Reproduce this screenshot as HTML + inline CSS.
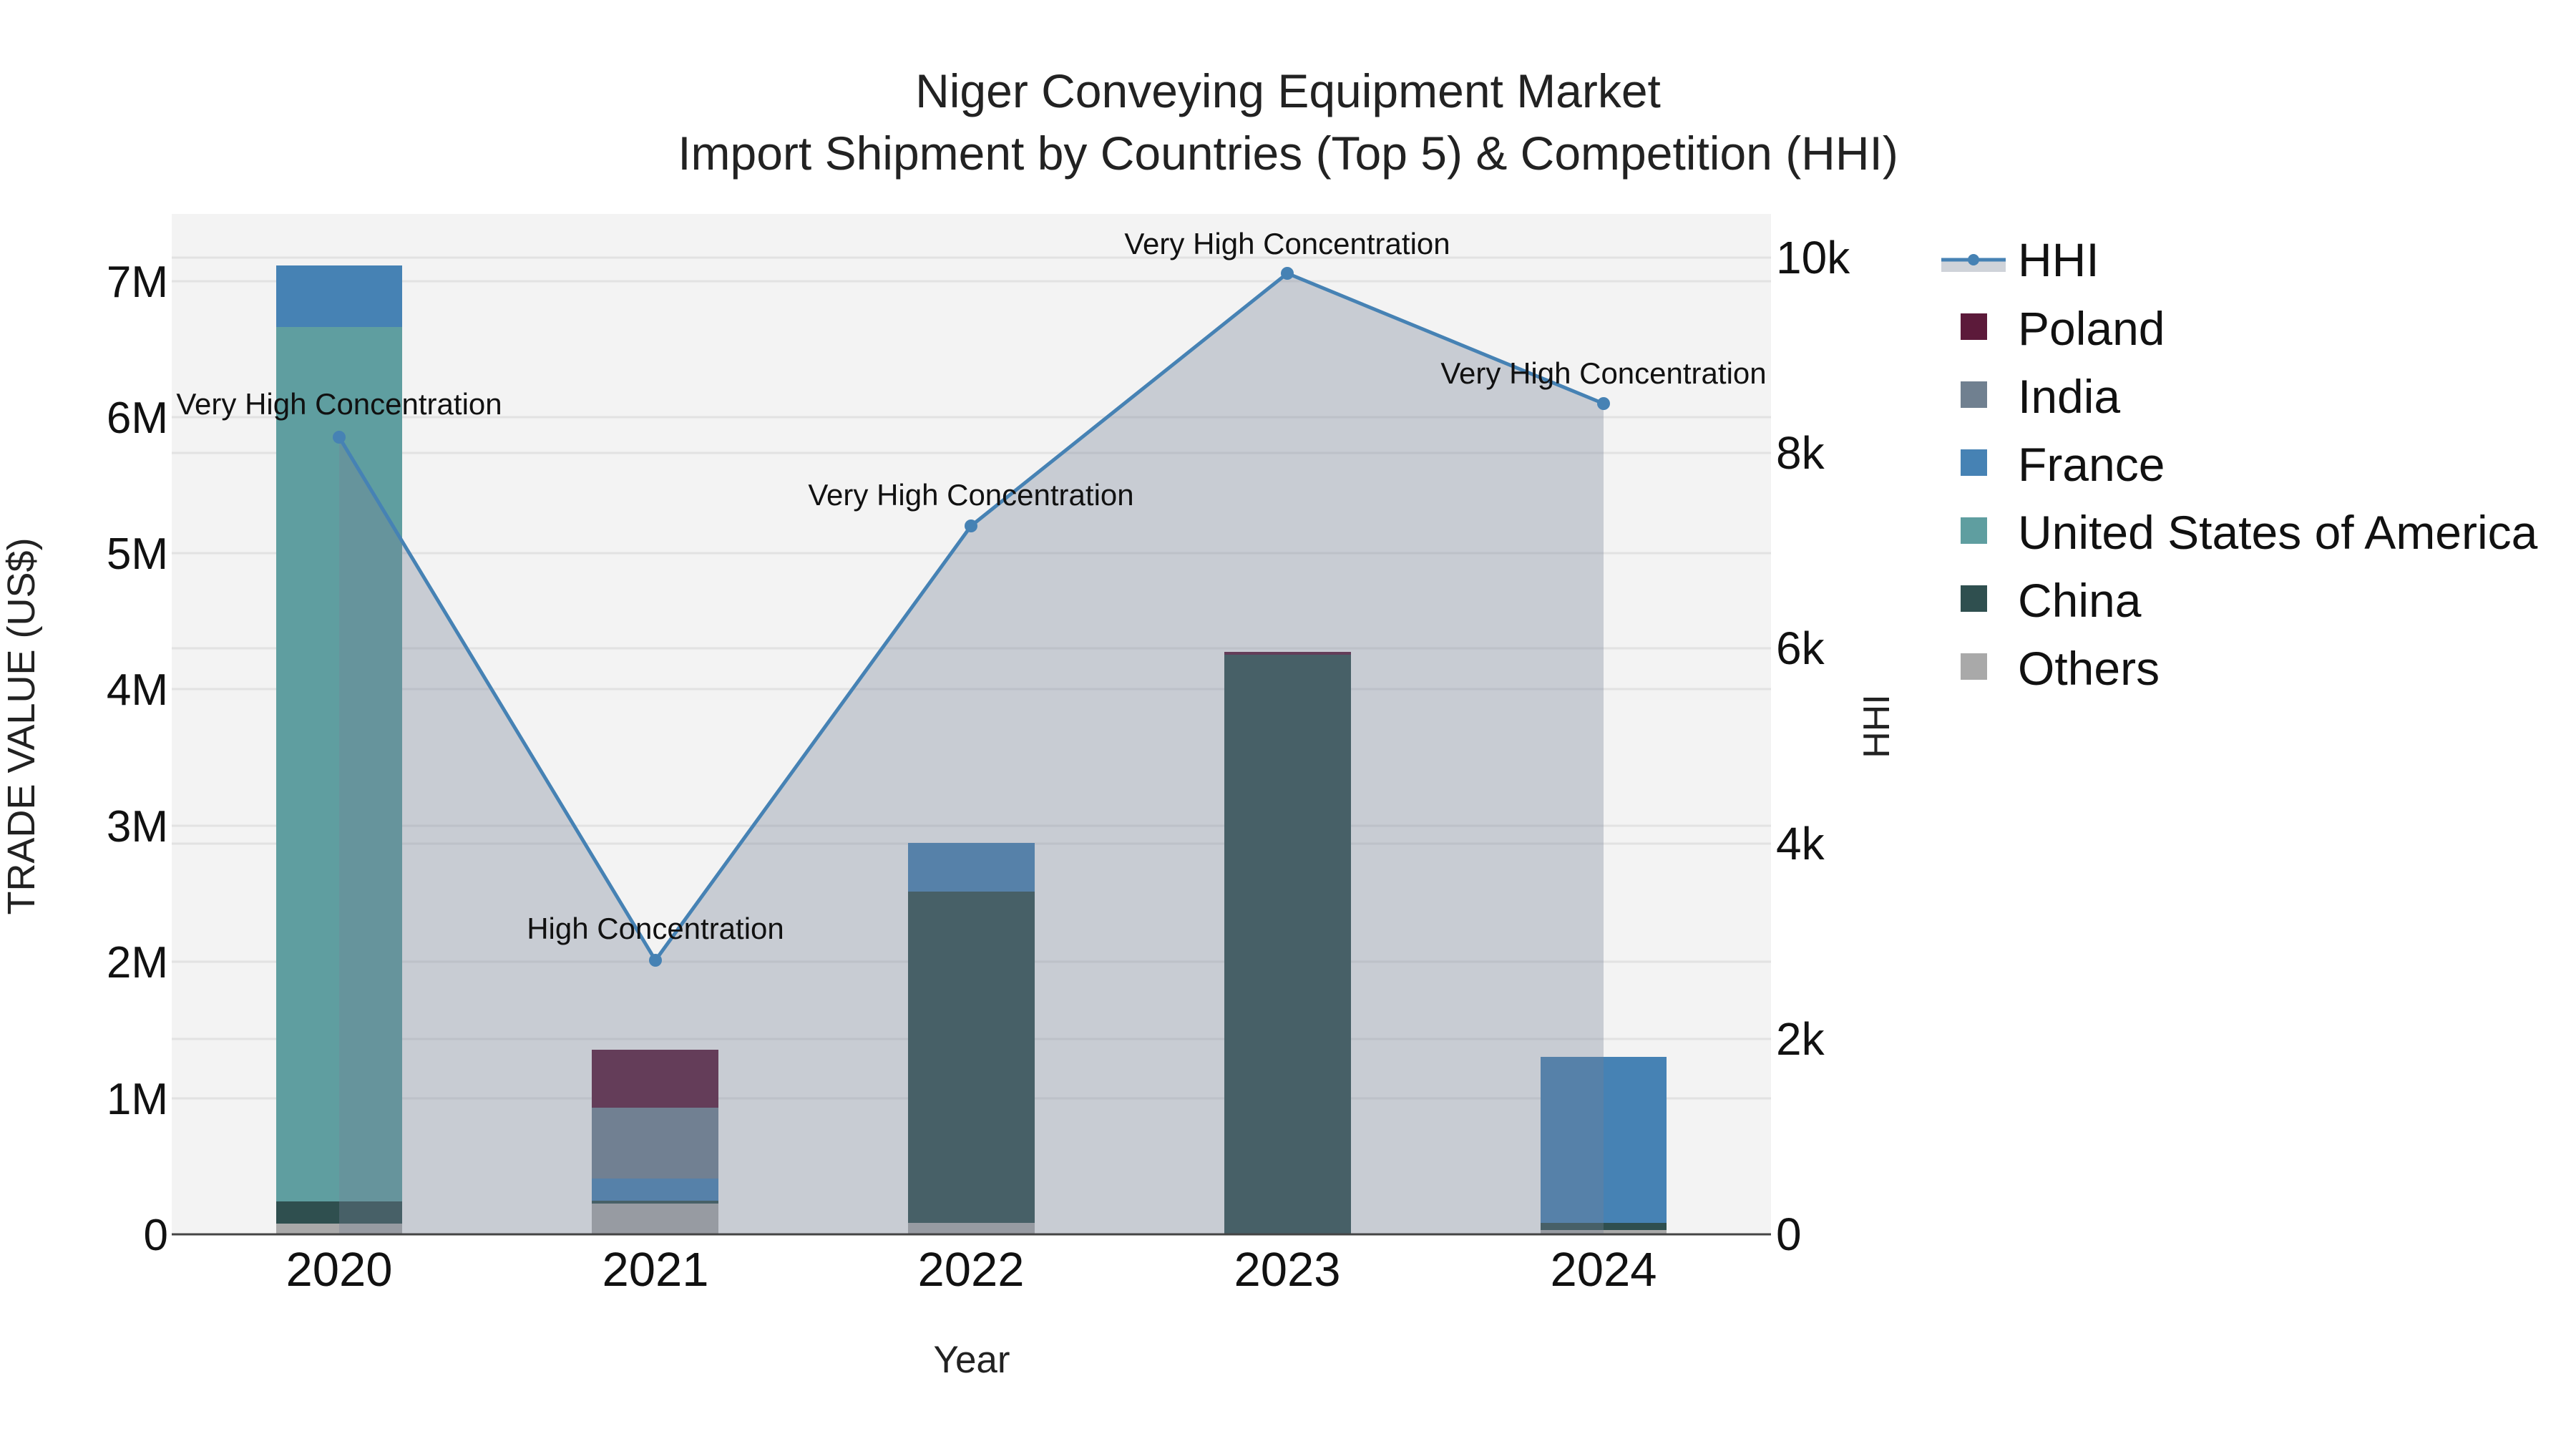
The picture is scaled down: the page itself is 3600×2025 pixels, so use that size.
<!DOCTYPE html>
<html><head><meta charset="utf-8"><style>
html,body{margin:0;padding:0;background:#fff}
svg{display:block}
text{font-family:"Liberation Sans",Arial,sans-serif}
</style></head><body>
<svg width="3600" height="2025" viewBox="0 0 3600 2025" xmlns="http://www.w3.org/2000/svg">
<rect width="3600" height="2025" fill="#fff"/>
<rect x="240" y="299" width="2235" height="1426" fill="#f3f3f3"/>
<g stroke="#e2e2e2" stroke-width="3">
<line x1="240" x2="2475" y1="1535" y2="1535"/><line x1="240" x2="2475" y1="1344" y2="1344"/>
<line x1="240" x2="2475" y1="1154" y2="1154"/><line x1="240" x2="2475" y1="963" y2="963"/>
<line x1="240" x2="2475" y1="773" y2="773"/><line x1="240" x2="2475" y1="583" y2="583"/>
<line x1="240" x2="2475" y1="393" y2="393"/>
<line x1="240" x2="2475" y1="1452" y2="1452"/><line x1="240" x2="2475" y1="1179" y2="1179"/>
<line x1="240" x2="2475" y1="906" y2="906"/><line x1="240" x2="2475" y1="633" y2="633"/>
<line x1="240" x2="2475" y1="360" y2="360"/>
</g>
<g>
<rect x="386" y="1710" width="176" height="15" fill="#a9a9a9"/>
<rect x="386" y="1679" width="176" height="31" fill="#2f4f4f"/>
<rect x="386" y="457" width="176" height="1222" fill="#5f9ea0"/>
<rect x="386" y="371" width="176" height="86" fill="#4682b4"/>

<rect x="827" y="1682" width="177" height="43" fill="#a9a9a9"/>
<rect x="827" y="1678" width="177" height="4" fill="#2f4f4f"/>
<rect x="827" y="1647" width="177" height="31" fill="#4682b4"/>
<rect x="827" y="1548" width="177" height="99" fill="#708090"/>
<rect x="827" y="1467" width="177" height="81" fill="#5c1a3a"/>

<rect x="1269" y="1709" width="177" height="16" fill="#a9a9a9"/>
<rect x="1269" y="1246" width="177" height="463" fill="#2f4f4f"/>
<rect x="1269" y="1178" width="177" height="68" fill="#4682b4"/>

<rect x="1711" y="915" width="177" height="810" fill="#2f4f4f"/>
<rect x="1711" y="911" width="177" height="4" fill="#5c1a3a"/>

<rect x="2153" y="1719" width="176" height="6" fill="#a9a9a9"/>
<rect x="2153" y="1709" width="176" height="10" fill="#2f4f4f"/>
<rect x="2153" y="1477" width="176" height="232" fill="#4682b4"/>
</g>
<polygon points="474,611 916,1342 1357,735 1799,382 2241,564 2241,1725 474,1725" fill="rgb(116,128,149)" fill-opacity="0.34"/>
<line x1="240" x2="2475" y1="1725" y2="1725" stroke="#444" stroke-width="3"/>
<polyline points="474,611 916,1342 1357,735 1799,382 2241,564" fill="none" stroke="#4682b4" stroke-width="5"/>
<g fill="#4682b4">
<circle cx="474" cy="611" r="9"/><circle cx="916" cy="1342" r="9"/><circle cx="1357" cy="735" r="9"/><circle cx="1799" cy="382" r="9"/><circle cx="2241" cy="564" r="9"/>
</g>
<g font-size="42" fill="#111" text-anchor="middle">
<text x="474" y="579">Very High Concentration</text>
<text x="916" y="1312">High Concentration</text>
<text x="1357" y="706">Very High Concentration</text>
<text x="1799" y="355">Very High Concentration</text>
<text x="2241" y="536">Very High Concentration</text>
</g>
<g font-size="66" fill="#222" text-anchor="middle">
<text x="1800" y="150">Niger Conveying Equipment Market</text>
<text x="1800" y="237">Import Shipment by Countries (Top 5) &amp; Competition (HHI)</text>
</g>
<g font-size="62" fill="#111" text-anchor="end">
<text x="235" y="1747">0</text><text x="235" y="1557">1M</text><text x="235" y="1366">2M</text>
<text x="235" y="1176">3M</text><text x="235" y="985">4M</text><text x="235" y="795">5M</text>
<text x="235" y="605">6M</text><text x="235" y="415">7M</text>
</g>
<g font-size="64" fill="#111">
<text x="2482" y="1747">0</text><text x="2482" y="1474">2k</text><text x="2482" y="1201">4k</text>
<text x="2482" y="928">6k</text><text x="2482" y="655">8k</text><text x="2482" y="382">10k</text>
</g>
<g font-size="67" fill="#111" text-anchor="middle">
<text x="474" y="1797">2020</text><text x="916" y="1797">2021</text><text x="1357" y="1797">2022</text>
<text x="1799" y="1797">2023</text><text x="2241" y="1797">2024</text>
</g>
<text x="1358" y="1918" font-size="53" fill="#222" text-anchor="middle">Year</text>
<text transform="translate(48,1015) rotate(-90)" font-size="54" fill="#222" text-anchor="middle">TRADE VALUE (US$)</text>
<text transform="translate(2640,1015) rotate(-90)" font-size="52" fill="#222" text-anchor="middle">HHI</text>
<rect x="2713" y="363" width="90" height="17" fill="#cfd3d9"/>
<line x1="2713" x2="2803" y1="363" y2="363" stroke="#4682b4" stroke-width="5"/>
<circle cx="2758" cy="363" r="8" fill="#4682b4"/>
<rect x="2740" y="438" width="37" height="37" fill="#5c1a3a"/>
<rect x="2740" y="533" width="37" height="37" fill="#708090"/>
<rect x="2740" y="628" width="37" height="37" fill="#4682b4"/>
<rect x="2740" y="723" width="37" height="37" fill="#5f9ea0"/>
<rect x="2740" y="818" width="37" height="37" fill="#2f4f4f"/>
<rect x="2740" y="913" width="37" height="37" fill="#a9a9a9"/>
<g font-size="66" fill="#111">
<text x="2820" y="386">HHI</text>
<text x="2820" y="482">Poland</text>
<text x="2820" y="577">India</text>
<text x="2820" y="672">France</text>
<text x="2820" y="767">United States of America</text>
<text x="2820" y="862">China</text>
<text x="2820" y="957">Others</text>
</g>
</svg>
</body></html>
